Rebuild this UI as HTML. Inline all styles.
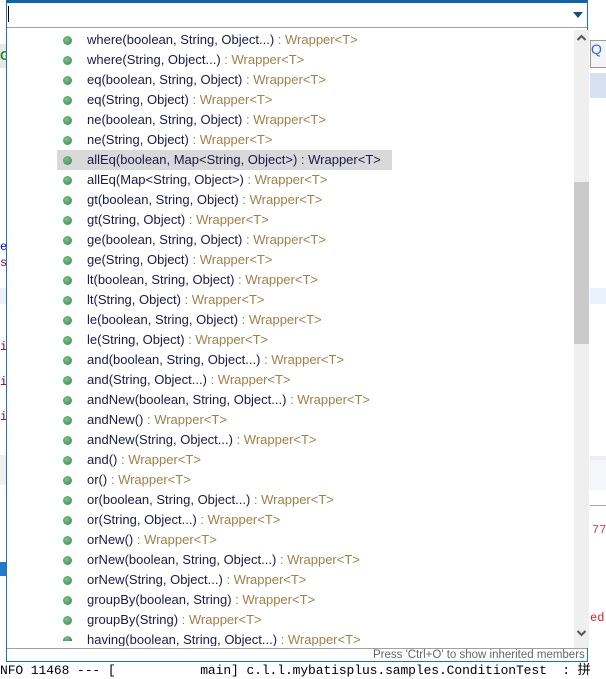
<!DOCTYPE html><html><head><style>
body{margin:0;width:606px;height:679px;overflow:hidden;background:#fff;position:relative;font-family:"Segoe UI","Liberation Sans",sans-serif}
.a{position:absolute}
.pop{left:6px;top:0;width:582px;height:662px;border:1px solid #1a73c0;border-top:3px solid #0b63b2;background:#fff;box-sizing:border-box}
.row{position:absolute;left:87px;font-size:13px;line-height:20px;color:#1a1a4a;white-space:nowrap}
.row span{color:#a0804a}
.dot{position:absolute;left:63px;width:9px;height:9px;border-radius:50%;background:radial-gradient(circle at 40% 35%,#7fc08a,#2e8a46)}
</style></head><body>
<div class="a" style="left:0;top:44px;width:6px;height:24px;background:#e8e8e8"></div>
<div class="a" style="left:0;top:48px;width:6px;height:14px;color:#2a8a2a;font-size:13px;font-weight:bold">G</div>
<div class="a" style="left:590px;top:40px;width:16px;height:26px;background:#f4f4f4;border:1px solid #999;color:#3366cc;font-size:14px">Q</div>
<div class="a" style="left:590px;top:73px;width:16px;height:25px;background:#d6e2f2"></div>
<div class="a" style="left:590px;top:288px;width:16px;height:16px;background:#e8f1fc"></div>
<div class="a" style="left:0;top:288px;width:6px;height:16px;background:#e8f1fc"></div>
<div class="a" style="left:590px;top:456px;width:16px;height:14px;background:#eee"></div>
<div class="a" style="left:590px;top:460px;width:16px;height:30px;background:#f4f6fa"></div>
<div class="a" style="left:590px;top:505px;width:16px;height:1px;background:#aaa"></div>
<div class="a" style="left:592px;top:523px;font:12px 'Liberation Mono',monospace;color:#e04060">77</div>
<div class="a" style="left:590px;top:611px;font:12px 'Liberation Mono',monospace;color:#e02020">ed</div>
<div class="a" style="left:0;top:455px;width:6px;height:30px;background:#f0f0f0"></div>
<div class="a" style="left:0;top:562px;width:6px;height:14px;background:#1f7ad0"></div>
<div class="a" style="left:0;top:240px;font:12px 'Liberation Mono',monospace;color:#00f">e</div>
<div class="a" style="left:0;top:256px;font:12px 'Liberation Mono',monospace;color:#7f0055">s</div>
<div class="a" style="left:0;top:340px;font:12px 'Liberation Mono',monospace;color:#7f0055">i</div>
<div class="a" style="left:0;top:375px;font:12px 'Liberation Mono',monospace;color:#7f0055">i</div>
<div class="a" style="left:0;top:410px;font:12px 'Liberation Mono',monospace;color:#7f0055">i</div>
<div class="a pop"></div>
<div class="a" style="left:8px;top:6px;width:1px;height:16px;background:#000"></div>
<div class="a" style="left:573px;top:12px;width:0;height:0;border-left:5px solid transparent;border-right:5px solid transparent;border-top:6px solid #1d4f7a"></div>
<div class="a" style="left:7px;top:27px;width:580px;height:1px;background:#a0a0a0"></div>
<div class="a" style="left:574px;top:30px;width:15px;height:618px;background:#efefef"></div>
<div class="a" style="left:574px;top:182px;width:15px;height:162px;background:#cacaca"></div>
<svg class="a" style="left:576px;top:34px" width="11" height="8"><path d="M1.5 6L5.5 2L9.5 6" stroke="#555" stroke-width="2" fill="none"/></svg>
<svg class="a" style="left:576px;top:629px" width="11" height="8"><path d="M1.5 2L5.5 6L9.5 2" stroke="#555" stroke-width="2" fill="none"/></svg>
<div class="a" style="left:57px;top:150px;width:335px;height:20px;background:#d9d9d9"></div>
<div class="a" style="left:7px;top:648px;width:580px;height:1px;background:#a0a0a0"></div>
<div class="a" style="left:373px;top:648px;font-size:11.5px;color:#666;line-height:15px">Press 'Ctrl+O' to show inherited members</div>
<div class="a" style="left:0;top:663px;font:13px 'Liberation Mono',monospace;color:#000;white-space:pre;line-height:15px;letter-spacing:-0.1px">NFO 11468 --- [           main] c.l.l.mybatisplus.samples.ConditionTest  : 拼</div>
<div id="L"></div>
<script>
var r=[["where(boolean, String, Object...)"],["where(String, Object...)"],["eq(boolean, String, Object)"],["eq(String, Object)"],["ne(boolean, String, Object)"],["ne(String, Object)"],["allEq(boolean, Map&lt;String, Object&gt;)",1],["allEq(Map&lt;String, Object&gt;)"],["gt(boolean, String, Object)"],["gt(String, Object)"],["ge(boolean, String, Object)"],["ge(String, Object)"],["lt(boolean, String, Object)"],["lt(String, Object)"],["le(boolean, String, Object)"],["le(String, Object)"],["and(boolean, String, Object...)"],["and(String, Object...)"],["andNew(boolean, String, Object...)"],["andNew()"],["andNew(String, Object...)"],["and()"],["or()"],["or(boolean, String, Object...)"],["or(String, Object...)"],["orNew()"],["orNew(boolean, String, Object...)"],["orNew(String, Object...)"],["groupBy(boolean, String)"],["groupBy(String)"],["having(boolean, String, Object...)"]];
var h="";r.forEach(function(x,i){var y=30+i*20;
h+='<div class="dot" style="top:'+(y+6)+'px;'+(i==30?'height:5px;border-radius:5px 5px 0 0':'')+'"></div><div class="row" style="top:'+y+'px;'+(i==30?'height:16px;overflow:hidden':'')+'">'+x[0]+(x[1]?' : Wrapper&lt;T&gt;':' <span>: Wrapper&lt;T&gt;</span>')+'</div>';});
document.getElementById("L").innerHTML=h;
</script>
</body></html>
